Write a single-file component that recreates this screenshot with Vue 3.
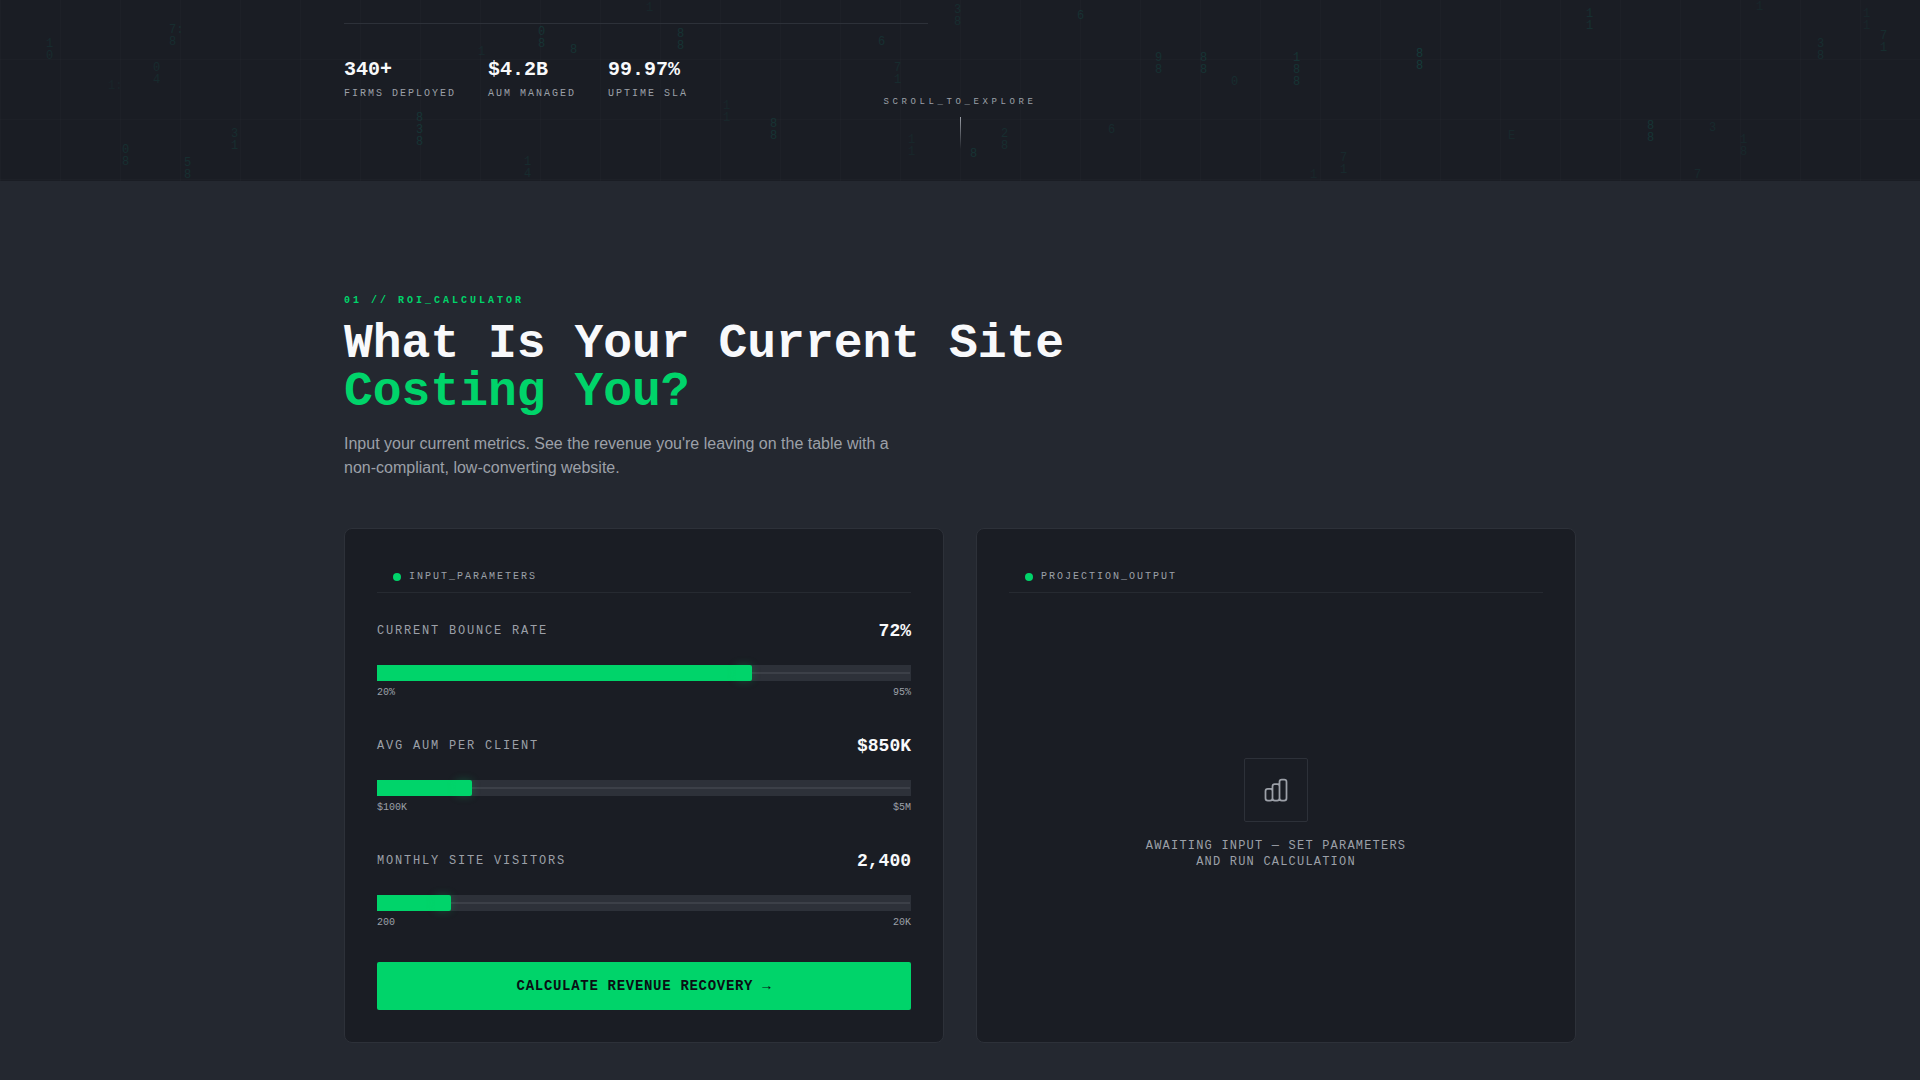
<script setup>
import { ref, computed } from 'vue'

const stats = [
  { value: '340+', label: 'FIRMS DEPLOYED' },
  { value: '$4.2B', label: 'AUM MANAGED' },
  { value: '99.97%', label: 'UPTIME SLA' },
]

const bounce = ref(72)
const aum = ref(850)
const visitors = ref(2400)

const sliders = computed(() => [
  { id: 'bounce', label: 'CURRENT BOUNCE RATE', model: bounce, min: 20, max: 95, step: 1, low: '20%', high: '95%', text: `${bounce.value}%` },
  { id: 'aum', label: 'AVG AUM PER CLIENT', model: aum, min: 100, max: 5000, step: 50, low: '$100K', high: '$5M', text: aum.value >= 1000 ? `$${aum.value / 1000}M` : `$${aum.value}K` },
  { id: 'visitors', label: 'MONTHLY SITE VISITORS', model: visitors, min: 200, max: 20000, step: 100, low: '200', high: '20K', text: visitors.value.toLocaleString('en-US') },
])

const ratio = (s) => (s.model.value - s.min) / (s.max - s.min)

// Falling data streams: x, y, glyphs, opacity
const streams = [
  [46, 38, '10', 0.08], [169, 24, '7:8', 0.09], [153, 62, '04', 0.08], [108, 80, '1:', 0.04],
  [122, 144, '08', 0.1], [184, 157, '58', 0.1], [231, 128, '31', 0.09], [416, 112, '838', 0.13],
  [538, 26, '08', 0.12], [570, 44, '8', 0.12], [524, 156, '14', 0.08], [478, 46, '1', 0.06],
  [646, 2, '1', 0.05], [677, 28, '88', 0.12], [723, 100, '11', 0.05], [770, 118, '88', 0.12],
  [878, 36, '6', 0.1], [894, 62, '71', 0.08], [908, 134, '11', 0.05], [954, 4, '38', 0.09],
  [970, 148, '8', 0.12], [1001, 128, '28', 0.09], [1077, 10, '6', 0.11], [1108, 124, '6', 0.08],
  [1155, 52, '98', 0.11], [1200, 52, '88', 0.13], [1231, 76, '0', 0.09], [1293, 52, '188', 0.13],
  [1416, 48, '88', 0.17], [1340, 152, '71', 0.07], [1508, 130, 'E', 0.06], [1586, 8, '11', 0.1],
  [1647, 120, '88', 0.13], [1709, 122, '3', 0.07], [1740, 134, '18', 0.06], [1817, 38, '38', 0.09],
  [1756, 1, '1', 0.05], [1863, 8, '11', 0.05], [1880, 30, '71', 0.09], [1694, 169, '7', 0.07], [1310, 169, '1', 0.05],
]
</script>

<template>
  <div class="page">
    <header class="hero">
      <div class="rain" aria-hidden="true">
        <span
          v-for="([x, y, glyphs, alpha], i) in streams"
          :key="i"
          class="stream"
          :style="{ left: `${(x / 1920) * 100}%`, top: `${y}px`, opacity: alpha }"
        >{{ glyphs }}</span>
      </div>
      <div class="container">
        <dl class="stats">
          <div v-for="s in stats" :key="s.label" class="stat">
            <dt>{{ s.label }}</dt>
            <dd>{{ s.value }}</dd>
          </div>
        </dl>
      </div>
      <div class="scroll">
        <span>SCROLL_TO_EXPLORE</span>
        <i></i>
      </div>
    </header>

    <section class="roi">
      <div class="container">
        <p class="eyebrow">01 // ROI_CALCULATOR</p>
        <h2>What Is Your Current Site<br /><em>Costing You?</em></h2>
        <p class="lead">Input your current metrics. See the revenue you're leaving on the table with a non-compliant, low-converting website.</p>

        <div class="panels">
          <form class="panel" @submit.prevent>
            <h3 class="panel-head"><i class="dot"></i>INPUT_PARAMETERS</h3>
            <div v-for="s in sliders" :key="s.id" class="field">
              <div class="field-head">
                <label :for="s.id">{{ s.label }}</label>
                <output :for="s.id">{{ s.text }}</output>
              </div>
              <input
                :id="s.id"
                v-model.number="s.model.value"
                type="range"
                :min="s.min"
                :max="s.max"
                :step="s.step"
                :style="{ '--ratio': ratio(s) }"
              />
              <div class="scale"><span>{{ s.low }}</span><span>{{ s.high }}</span></div>
            </div>
            <button type="submit">CALCULATE REVENUE RECOVERY →</button>
          </form>

          <div class="panel">
            <h3 class="panel-head"><i class="dot"></i>PROJECTION_OUTPUT</h3>
            <div class="empty">
              <div class="icon">
                <svg width="28" height="28" viewBox="0 0 24 24" fill="none" stroke="currentColor" stroke-width="1.5" stroke-linecap="round" stroke-linejoin="round">
                  <path d="M9 19v-6a2 2 0 00-2-2H5a2 2 0 00-2 2v6a2 2 0 002 2h2a2 2 0 002-2zm0 0V9a2 2 0 012-2h2a2 2 0 012 2v10m-6 0a2 2 0 002 2h2a2 2 0 002-2m0 0V5a2 2 0 012-2h2a2 2 0 012 2v14a2 2 0 01-2 2h-2a2 2 0 01-2-2z" />
                </svg>
              </div>
              <p>AWAITING INPUT — SET PARAMETERS<br />AND RUN CALCULATION</p>
            </div>
          </div>
        </div>
      </div>
    </section>
  </div>
</template>

<style>
body {
  margin: 0;
  background: #242830;
}
</style>

<style scoped>
.page {
  --mono: "Liberation Mono", "Courier New", monospace;
  --green: #00d46a;
  --muted: #9ca0a8;
  --line: #2d3139;
  font-family: var(--mono);
  color: #f8f9fb;
}
h2, h3, p, dl, dd {
  margin: 0;
}
.container {
  box-sizing: border-box;
  max-width: 1280px;
  margin: 0 auto;
  padding: 0 24px;
}
.hero {
  position: relative;
  overflow: hidden;
  box-sizing: border-box;
  min-height: 181px;
  padding-top: 23px;
  background-color: #1a1d24;
  background-image:
    linear-gradient(to right, rgba(255, 255, 255, 0.01) 1px, transparent 1px),
    linear-gradient(to bottom, rgba(255, 255, 255, 0.01) 1px, transparent 1px);
  background-position: 0 -1px;
  background-size: 60px 60px;
}
.rain {
  position: absolute;
  inset: 0;
}
.stream {
  position: absolute;
  width: 8px;
  font-size: 12px;
  line-height: 12px;
  word-break: break-all;
  color: #00c8a0;
}
.stats {
  position: relative;
  display: flex;
  gap: 32px;
  box-sizing: border-box;
  width: calc(50% - 32px);
  padding-top: 32px;
  border-top: 1px solid var(--line);
}
.stat {
  display: flex;
  flex-direction: column-reverse;
}
.stat dd {
  font-size: 20px;
  line-height: 28px;
  font-weight: 700;
}
.stat dt {
  margin-top: 2px;
  font-size: 10px;
  line-height: 15px;
  letter-spacing: 2px;
  color: var(--muted);
}
.scroll {
  position: absolute;
  left: 0;
  right: 0;
  bottom: 32px;
  display: flex;
  flex-direction: column;
  align-items: center;
  gap: 8px;
  font-size: 9px;
  line-height: 14px;
  letter-spacing: 0.4em;
  color: var(--muted);
}
.scroll i {
  width: 1px;
  height: 32px;
  background: linear-gradient(to bottom, var(--muted), transparent);
}
.roi {
  padding: 112px 0 32px;
}
.eyebrow {
  font-size: 10px;
  line-height: 15px;
  font-weight: 700;
  letter-spacing: 3px;
  color: var(--green);
}
h2 {
  margin-top: 12px;
  font-size: 48px;
  line-height: 48px;
  font-weight: 700;
}
h2 em {
  font-style: normal;
  color: var(--green);
}
.lead {
  max-width: 576px;
  margin-top: 16px;
  font: 16px/24px "Liberation Sans", Arial, sans-serif;
  color: var(--muted);
}
.panels {
  display: grid;
  grid-template-columns: 1fr 1fr;
  gap: 32px;
  margin-top: 48px;
}
.panel {
  display: flex;
  flex-direction: column;
  padding: 32px;
  border: 1px solid var(--line);
  border-radius: 8px;
  background: #1a1d24;
}
.panel-head {
  display: flex;
  align-items: center;
  gap: 8px;
  margin-bottom: 24px;
  padding: 8px 16px;
  border-bottom: 1px solid #262a31;
  font-size: 10px;
  line-height: 15px;
  font-weight: 400;
  letter-spacing: 2px;
  color: var(--muted);
}
.dot {
  width: 8px;
  height: 8px;
  border-radius: 50%;
  background: var(--green);
}
.field {
  margin-bottom: 32px;
}
.field-head {
  display: flex;
  justify-content: space-between;
  align-items: center;
  margin-bottom: 20px;
  line-height: 28px;
}
.field-head label {
  font-size: 12px;
  letter-spacing: 0.15em;
  color: var(--muted);
}
.field-head output {
  font-size: 18px;
  font-weight: 700;
}
input[type="range"] {
  -webkit-appearance: none;
  appearance: none;
  display: block;
  width: 100%;
  height: 16px;
  margin: 0;
  background:
    linear-gradient(var(--green), var(--green)) left / calc((100% - 16px) * var(--ratio) + 8px) 100% no-repeat,
    linear-gradient(#3c4048, #3c4048) center / calc(100% - 2px) 2px no-repeat,
    #2d3139;
}
input[type="range"]::-webkit-slider-thumb {
  -webkit-appearance: none;
  width: 16px;
  height: 16px;
  border-radius: 2px;
  background: var(--green);
  box-shadow: 0 0 8px rgba(0, 212, 106, 0.25);
}
.scale {
  display: flex;
  justify-content: space-between;
  margin-top: 4px;
  font-size: 10px;
  line-height: 15px;
  color: var(--muted);
}
button {
  height: 48px;
  border: 0;
  border-radius: 2px;
  background: var(--green);
  font: 700 14px/20px var(--mono);
  letter-spacing: 0.05em;
  color: #0a0f14;
  cursor: pointer;
}
.empty {
  flex: 1;
  display: flex;
  flex-direction: column;
  align-items: center;
  justify-content: center;
  gap: 16px;
  font-size: 12px;
  line-height: 16px;
  letter-spacing: 0.1em;
  text-align: center;
  color: var(--muted);
}
.icon {
  display: grid;
  place-items: center;
  box-sizing: border-box;
  width: 64px;
  height: 64px;
  border: 1px solid var(--line);
  border-radius: 2px;
}
</style>
